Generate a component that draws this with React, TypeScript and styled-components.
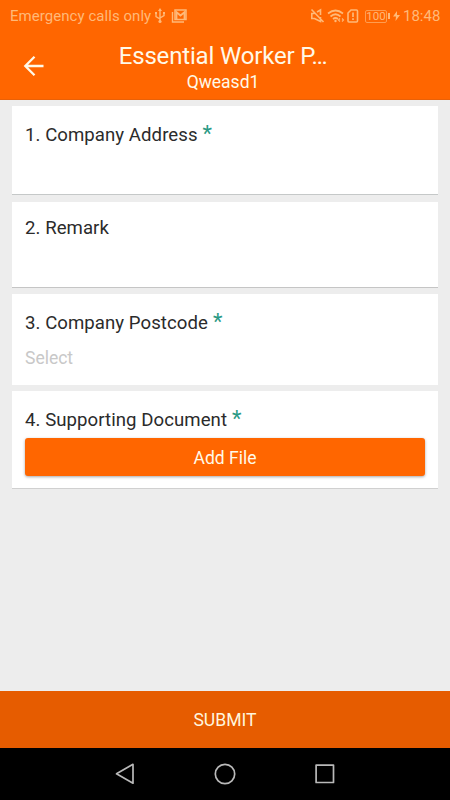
import React from "react";
import styled, { createGlobalStyle } from "styled-components";

const GlobalStyle = createGlobalStyle`
  body { margin: 0; background: #ededed; }
  *, *::before, *::after { box-sizing: border-box; }
`;

const Screen = styled.div`
  display: flex;
  flex-direction: column;
  width: 450px;
  height: 800px;
  overflow: hidden;
  background: #ededed;
  font-family: Roboto, "Liberation Sans", sans-serif;
`;

const StatusBar = styled.div`
  display: flex;
  flex: none;
  justify-content: space-between;
  height: 32px;
  padding: 0 10px;
  background: #ff6600;
  color: #ffb978;
  font-size: 15px;
  line-height: 32px;
`;

const StatusGroup = styled.div`
  display: flex;
  align-items: center;
  white-space: nowrap;
`;

const StatusText = styled.span<{ $width: number; $spacing?: number; $gap?: number }>`
  width: ${(p) => p.$width}px;
  margin-left: ${(p) => p.$gap ?? 0}px;
  letter-spacing: ${(p) => p.$spacing ?? 0}px;
`;

const StatusIcon = styled.svg<{ $gap?: number }>`
  display: block;
  flex: none;
  margin-left: ${(p) => p.$gap ?? 0}px;
  fill: none;
  stroke: currentColor;
  stroke-width: 1.4;
`;

const Battery = styled.div`
  display: flex;
  align-items: center;
  margin-left: 6px;
`;

const BatteryBody = styled.span`
  width: 22px;
  height: 13px;
  border: 1px solid #ff9d50;
  border-radius: 2px;
  font-size: 11.5px;
  line-height: 11px;
  text-align: center;
`;

const BatteryTip = styled.span`
  width: 2px;
  height: 6px;
  margin-left: 1px;
  background: currentColor;
`;

const AppBar = styled.header`
  display: grid;
  flex: none;
  grid-template-columns: 68px 1fr 72px;
  height: 68px;
  border-bottom: 1px solid #e96108;
  background: #ff6600;
  color: #fff9e8;
`;

const BackButton = styled.button`
  display: block;
  height: 68px;
  padding: 0 0 0 22px;
  border: 0;
  background: none;
  color: inherit;
  text-align: left;
`;

const Titles = styled.div`
  padding-top: 8px;
  text-align: center;
  white-space: nowrap;
`;

const Title = styled.h1`
  margin: 0;
  font-size: 24px;
  font-weight: 400;
  line-height: 32px;
  letter-spacing: -0.17px;
`;

const Subtitle = styled.div`
  font-size: 17.5px;
  line-height: 21px;
`;

const Form = styled.main`
  display: flex;
  flex: 1;
  flex-direction: column;
  padding: 6px 12px 0;
`;

const Card = styled.section<{ $height: number; $gap: number; $top: number; $line: string }>`
  height: ${(p) => p.$height}px;
  margin-bottom: ${(p) => p.$gap}px;
  padding: ${(p) => p.$top}px 13px 0;
  border-bottom: 1px solid ${(p) => p.$line};
  background: #fff;
`;

const Label = styled.div`
  height: 24px;
  color: #2b2b2b;
  font-size: 18.6px;
  line-height: 24px;
  letter-spacing: 0.06px;
`;

const Required = styled.span`
  margin-left: 5px;
  color: #2b9a85;
  font-size: 22px;
  line-height: 20px;
`;

const Placeholder = styled.div`
  margin-top: 11px;
  color: #c8c8c8;
  font-size: 17.5px;
  line-height: 24px;
`;

const AddButton = styled.button`
  display: block;
  width: 100%;
  height: 38px;
  margin-top: 6px;
  padding: 0;
  border: 0;
  border-radius: 3px;
  background: #ff6600;
  box-shadow: 0 1px 3px rgba(0, 0, 0, 0.35);
  color: #fff9e8;
  font: 17.5px/40px Roboto, sans-serif;
`;

const SubmitButton = styled.button`
  flex: none;
  height: 57px;
  padding: 0;
  border: 0;
  background: #e65c00;
  color: #fff5dd;
  font: 17.6px/58px Roboto, sans-serif;
`;

const NavBar = styled.nav`
  display: flex;
  flex: none;
  align-items: center;
  justify-content: center;
  gap: 76px;
  height: 52px;
  background: #000;
`;

const NavIcon = styled.svg`
  display: block;
  fill: none;
  stroke: #b9b9b9;
  stroke-width: 1.7;
  stroke-linejoin: round;
`;

type Question = {
  label: string;
  required?: boolean;
  height: number;
  gap: number;
  top: number;
  line: string;
  control?: React.ReactNode;
};

const questions: Question[] = [
  { label: "1. Company Address", required: true, height: 89, gap: 7, top: 17, line: "#c5c8c8" },
  { label: "2. Remark", height: 86, gap: 6, top: 14, line: "#c5c5c5" },
  {
    label: "3. Company Postcode", required: true, height: 91, gap: 6, top: 17, line: "#ffffff",
    control: <Placeholder>Select</Placeholder>,
  },
  {
    label: "4. Supporting Document", required: true, height: 98, gap: 0, top: 17, line: "#d0d0d0",
    control: <AddButton>Add File</AddButton>,
  },
];

export default function App() {
  return (
    <>
      <GlobalStyle />
      <Screen>
        <StatusBar>
          <StatusGroup>
            <StatusText $width={144} $spacing={0.05}>Emergency calls only</StatusText>
            <StatusIcon $gap={0} width="12" height="16" viewBox="0 0 12 16">
              <path d="M6 2V13M2 5V8.5L6 11M10 5V7.5L6 10" />
              <path d="M6 0L8 3H4ZM1 4H3V6H1ZM9 4H11V6H9Z" fill="currentColor" stroke="none" />
              <circle cx="6" cy="13.5" r="1.6" fill="currentColor" stroke="none" />
            </StatusIcon>
            <StatusIcon $gap={5} width="16" height="14" viewBox="0 0 16 14">
              <path d="M1.5 3V13H13" />
              <path d="M4 1H15V10.5H4Z" strokeWidth="1.5" />
              <path d="M5.5 10V3.2L9.5 6.5L13.5 3.2V10" strokeWidth="1.8" />
            </StatusIcon>
          </StatusGroup>
          <StatusGroup>
            <StatusIcon width="15" height="16" viewBox="0 0 15 16">
              <path d="M4.5 5.5H1.8V10.5H4.5L10.5 13.5V9M7 4L10.5 2V7M1.5 1.5L13.5 14" strokeWidth="1.6" />
            </StatusIcon>
            <StatusIcon $gap={2} width="18" height="16" viewBox="0 0 18 16">
              <path d="M1 5.5Q8.5 -.5 16 5.5M3.5 8.5Q8.5 4 13.5 8.5M6 11Q8.5 9 11 11" strokeWidth="1.7" />
              <circle cx="8.5" cy="13" r="1.2" fill="currentColor" stroke="none" />
              <path d="M13 10.5L11.5 12L13 13.5M15 10.5L16.5 12L15 13.5" strokeWidth="1.1" />
            </StatusIcon>
            <StatusIcon $gap={2} width="12" height="14" viewBox="0 0 12 14">
              <path d="M4 1H9.5Q10.5 1 10.5 2V12Q10.5 13 9.5 13H2Q1 13 1 12V4Z" strokeWidth="1.6" />
              <path d="M6 3.5V8M6 9.3V11" strokeWidth="1.7" />
            </StatusIcon>
            <Battery>
              <BatteryBody>100</BatteryBody>
              <BatteryTip />
            </Battery>
            <StatusIcon $gap={3} width="7" height="10" viewBox="0 0 7 10">
              <path d="M4 0L0 5.5H3L2.5 10L7 4H4Z" fill="currentColor" stroke="none" />
            </StatusIcon>
            <StatusText $width={37} $gap={3}>18:48</StatusText>
          </StatusGroup>
        </StatusBar>
        <AppBar>
          <BackButton aria-label="Back">
            <svg width="24" height="68" viewBox="0 0 24 68" fill="none" stroke="currentColor" strokeWidth="2.3">
              <path d="M21.5 34H4M12.5 24.8L3.3 34L12.5 43.2" />
            </svg>
          </BackButton>
          <Titles>
            <Title>Essential Worker P…</Title>
            <Subtitle>Qweasd1</Subtitle>
          </Titles>
        </AppBar>
        <Form>
          {questions.map((q) => (
            <Card key={q.label} $height={q.height} $gap={q.gap} $top={q.top} $line={q.line}>
              <Label>
                {q.label}
                {q.required && <Required>*</Required>}
              </Label>
              {q.control}
            </Card>
          ))}
        </Form>
        <SubmitButton>SUBMIT</SubmitButton>
        <NavBar>
          <NavIcon width="24" height="24" viewBox="0 0 24 24">
            <path d="M20 2.3V21.2L3.5 11.8Z" />
          </NavIcon>
          <NavIcon width="24" height="24" viewBox="0 0 24 24">
            <circle cx="12" cy="12" r="9.7" />
          </NavIcon>
          <NavIcon width="24" height="24" viewBox="0 0 24 24">
            <rect x="3.1" y="3.1" width="17.4" height="17.4" />
          </NavIcon>
        </NavBar>
      </Screen>
    </>
  );
}
